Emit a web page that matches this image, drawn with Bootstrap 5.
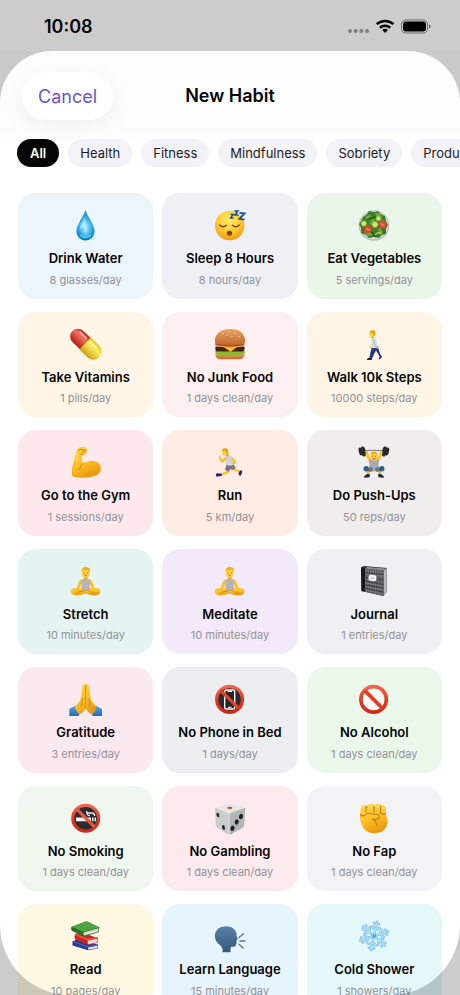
<!DOCTYPE html>
<html lang="en">
<head>
<meta charset="utf-8">
<meta name="viewport" content="width=device-width, initial-scale=1">
<title>New Habit</title>
<link rel="stylesheet" href="https://cdn.jsdelivr.net/npm/bootstrap@5.3.0/dist/css/bootstrap.min.css">
<style>
  body { font-family: Inter, "Liberation Sans", sans-serif; color: #060606; background: #fff; }
  .status { height: 51px; padding: 2px 29px 0 44px; font-size: 18px; font-weight: 600; }
  .sheet { min-height: 0; }
  /* dims everything outside the rounded sheet */
  .sheet::after { content: ""; position: absolute; inset: 0; border-radius: 52px 52px 70px 70px; box-shadow: 0 0 0 100px rgba(0,0,0,.2); pointer-events: none; }
  .sheet-head { padding: 21px 22px 19px; background: linear-gradient(#fdfdfd, #fcfcfc 80%, #fefefe); }
  .sheet-head h1 { font-size: 18px; line-height: 24px; font-weight: 600; }
  .cancel-btn { --bs-btn-color: #6654d8; --bs-btn-bg: #fff; --bs-btn-hover-bg: #f6f6fa; --bs-btn-hover-color: #6654d8; height: 48px; padding: 0 16px; font-size: 18px; box-shadow: 0 6px 28px rgba(0,0,0,.05); }
  .chips { gap: 9px; padding: 0 17px; overflow-x: auto; scrollbar-width: none; }
  .chips::-webkit-scrollbar, .habits::-webkit-scrollbar { display: none; }
  .chip { --bs-btn-color: #1c1c1e; --bs-btn-bg: #f2f2f7; --bs-btn-hover-bg: #e6e6ec; --bs-btn-hover-color: #1c1c1e; --bs-btn-active-bg: #060606; --bs-btn-active-color: #fff; flex: none; height: 28px; padding: 0 12px; font-size: 13px; line-height: 28px; }
  .chip.active { font-weight: 600; padding: 0 13px; }
  .habits { display: grid; grid-template-columns: repeat(3, 1fr); grid-auto-rows: max-content; gap: 13px 9px; padding: 26px 18px 40px; min-height: 0; overflow-y: auto; scrollbar-width: none; }
  .habit { border: 0; border-radius: 18px; padding: 16px 4px 11px; text-align: center; color: inherit; background: var(--tint); }
  .habit svg { display: block; width: 32px; height: 32px; margin: 0 auto 8px; overflow: visible; }
  .habit-name { display: block; font-size: 13px; line-height: 1.5; font-weight: 600; white-space: nowrap; }
  .habit-goal { display: block; margin-top: 3px; font-size: 11px; line-height: 16px; color: #929297; white-space: nowrap; }
  .t-water { --tint: #ecf5fb; } .t-sleep { --tint: #eff0f6; } .t-veg { --tint: #ebf6eb; }
  .t-amber { --tint: #fff5e6; } .t-junk { --tint: #fcefef; } .t-gym { --tint: #fde9eb; }
  .t-run { --tint: #ffece5; } .t-lift { --tint: #f0eeed; } .t-stretch { --tint: #e5f4f0; }
  .t-calm { --tint: #f4e9f8; } .t-journal { --tint: #eff0f2; } .t-thanks { --tint: #fce8ef; }
  .t-phone { --tint: #eceeef; } .t-alcohol { --tint: #ebf7eb; } .t-smoke { --tint: #eff6ee; }
  .t-gamble { --tint: #fdeaec; } .t-fist { --tint: #f3f3f6; } .t-read { --tint: #fff9e4; }
  .t-talk { --tint: #e6f4fe; } .t-cold { --tint: #e4f7f9; }
</style>
<script src="https://cdn.jsdelivr.net/npm/bootstrap@5.3.0/dist/js/bootstrap.bundle.min.js"></script>
</head>
<body class="vh-100 d-flex flex-column overflow-hidden">

<svg width="0" height="0" class="position-absolute" aria-hidden="true">
  <defs>
    <linearGradient id="gDrop" x1="0" y1="0" x2="0" y2="1"><stop offset="0" stop-color="#1287cf"/><stop offset=".45" stop-color="#3cb4ee"/><stop offset=".7" stop-color="#1d9be2"/><stop offset="1" stop-color="#0877c0"/></linearGradient>
    <radialGradient id="gDropIn" cx=".5" cy=".62" r=".5"><stop offset="0" stop-color="#c9f3ff"/><stop offset="1" stop-color="#6dd0f8" stop-opacity=".1"/></radialGradient>
    <radialGradient id="gFace" cx=".48" cy=".32" r=".7"><stop offset="0" stop-color="#ffee66"/><stop offset=".6" stop-color="#fdc530"/><stop offset="1" stop-color="#ee9612"/></radialGradient>
    <linearGradient id="gSkin" x1="0" y1="0" x2=".4" y2="1"><stop offset="0" stop-color="#ffd64a"/><stop offset=".6" stop-color="#fcbf25"/><stop offset="1" stop-color="#e99a13"/></linearGradient>
    <linearGradient id="gRed" x1="0" y1="0" x2="0" y2="1"><stop offset="0" stop-color="#f0684e"/><stop offset=".5" stop-color="#e23a26"/><stop offset="1" stop-color="#cf2a17"/></linearGradient>
    <linearGradient id="gPillR" x1="0" y1="0" x2="0" y2="1"><stop offset="0" stop-color="#b8261c"/><stop offset=".35" stop-color="#f0705e"/><stop offset="1" stop-color="#b61b12"/></linearGradient>
    <linearGradient id="gPillY" x1="0" y1="0" x2="0" y2="1"><stop offset="0" stop-color="#e6c723"/><stop offset=".35" stop-color="#fbec62"/><stop offset="1" stop-color="#c9a210"/></linearGradient>
    <linearGradient id="gBun" x1="0" y1="0" x2="0" y2="1"><stop offset="0" stop-color="#e9a566"/><stop offset="1" stop-color="#bd6a2a"/></linearGradient>
    <linearGradient id="gHead" x1="0" y1="0" x2="0" y2="1"><stop offset="0" stop-color="#587fa9"/><stop offset="1" stop-color="#36577f"/></linearGradient>
    <linearGradient id="gSleeve" x1="0" y1="0" x2="0" y2="1"><stop offset="0" stop-color="#58a7e4"/><stop offset="1" stop-color="#2268b4"/></linearGradient>
  </defs>
  <symbol id="yoga" viewBox="0 0 32 32">
    <path d="M2 25.500q5-3 11-2.500h6q6-.5 11 2.500q1.500 2.500-1.500 4q-3 1.500-8 .5l-5-1.500l-5 1.500q-5 1-8-.5q-3-1.500-1.500-4z" fill="url(#gSkin)"/>
    <path d="M5 29l8-3.500h5l8 3.500M8 26l7 1" fill="none" stroke="#d88b13" stroke-width=".9"/>
    <path d="M11.500 14.500q-2 .5-2.800 3l-2 5.500-4.700.8q-1.500.5-1 1.200l6.200.6q1.200-.2 1.700-1.600l2.600-5zM19.700 14.500q2 .5 2.800 3l2 5.500 4.700.8q1.500.5 1 1.200l-6.200.6q-1.200-.2-1.700-1.600l-2.600-5z" fill="#fcbf25"/>
    <path d="M11.300 14.500q1.500-.8 3-.8h2.800q1.500 0 3 .8.3 3-.4 5.500l.5 4.600q-4.500 2-9.200 0l.6-4.600q-.7-3-.3-5.500z" fill="#b4b4c0"/>
    <path d="M14 11h3.500v3q-1.700 2-3.500 0z" fill="#eda61c"/>
    <ellipse cx="15.700" cy="7.800" rx="4" ry="5" fill="#ffcf3d"/>
    <path d="M11.500 7.500Q10.800 3 14 2.200q4-1 5.500 1.300 1 1.600.3 4-.8-2.500-2-2.700-3 .8-5 0-1 .7-1.300 2.700z" fill="#efae18"/>
    <path d="M13.200 8q.7.5 1.400 0M16.900 8q.7.500 1.400 0M14.600 10.600h2.400" stroke="#8a5510" stroke-width=".7" fill="none"/>
  </symbol>
</svg>

<header class="status d-flex align-items-center justify-content-between flex-shrink-0">
  <time datetime="10:08">10:08</time>
  <span class="d-flex align-items-center">
    <svg width="84" height="20" viewBox="0 1 84 20" role="img" aria-label="No signal, Wi-Fi on, battery full">
      <g fill="#9f9f9f"><circle cx="3" cy="15" r="2"/><circle cx="8.700" cy="15" r="2"/><circle cx="14.300" cy="15" r="2"/><circle cx="20" cy="15" r="2"/></g>
      <g fill="none" stroke="#000" stroke-width="2.500"><path d="M29.800 8.200a12.200 12.200 0 0 1 16.600 0"/><path d="M33 11.700a7.600 7.600 0 0 1 10.200 0"/></g>
      <path d="M35.300 14a4.300 4.300 0 0 1 5.600 0L38.100 16.900z" fill="#000"/>
      <rect x="54.500" y="4" width="26" height="13" rx="4.200" fill="none" stroke="#858585"/>
      <rect x="56" y="5.500" width="23" height="10" rx="2.900" fill="#000"/>
      <path d="M82 8.300q1.600.7 1.600 2.200t-1.600 2.200z" fill="#858585"/>
    </svg>
  </span>
</header>

<main class="sheet position-relative flex-grow-1 d-flex flex-column">
  <div class="sheet-head row g-0 align-items-center flex-shrink-0">
    <div class="col"><button type="button" class="btn cancel-btn rounded-pill border-0">Cancel</button></div>
    <h1 class="col-auto m-0">New Habit</h1>
    <div class="col"></div>
  </div>

  <nav class="chips d-flex flex-shrink-0" aria-label="Categories">
    <button type="button" class="btn chip rounded-pill border-0 active" aria-pressed="true">All</button>
    <button type="button" class="btn chip rounded-pill border-0">Health</button>
    <button type="button" class="btn chip rounded-pill border-0">Fitness</button>
    <button type="button" class="btn chip rounded-pill border-0">Mindfulness</button>
    <button type="button" class="btn chip rounded-pill border-0">Sobriety</button>
    <button type="button" class="btn chip rounded-pill border-0">Productivity</button>
  </nav>

  <section class="habits flex-grow-1" aria-label="Habits">
    <button type="button" class="habit t-water">
      <svg viewBox="0 0 32 32" aria-hidden="true"><path d="M15.500 1C17 7 24.700 15.500 24.700 22.300a9.200 9.200 0 0 1-18.400 0C6.300 15.500 14 7 15.500 1z" fill="url(#gDrop)"/><path d="M15.500 5c1.500 5 7 11 7 17a7 7 0 0 1-14 0c0-6 5.500-12 7-17z" fill="url(#gDropIn)"/><path d="M14.500 8c-1 4-4.500 8-4.800 12 1.800-1.700 5-2 6.800-1 .4-4-.8-7-2-11z" fill="#c8f1ff" opacity=".65"/><path d="M10 26q5.500 5 11 0" stroke="#45d3f3" stroke-width="1.500" fill="none"/></svg>
      <span class="habit-name">Drink Water</span><span class="habit-goal">8 glasses/day</span>
    </button>
    <button type="button" class="habit t-sleep">
      <svg viewBox="0 0 32 32" aria-hidden="true"><circle cx="15.700" cy="16.500" r="14.700" fill="url(#gFace)"/><path d="M5.500 16q3.500 3.200 7 .3M18.300 16.300q3.500 3 7-.3" fill="none" stroke="#7a430c" stroke-width="1.400" stroke-linecap="round"/><ellipse cx="15.500" cy="24.200" rx="2.600" ry="2.500" fill="#703a0e"/><ellipse cx="15.500" cy="25.300" rx="1.500" ry=".9" fill="#a55a1d"/><g fill="none" stroke="#184f9e" stroke-linejoin="miter"><path d="M16.500 5.500h2.700l-2.700 3.500h3" stroke-width="1.300"/><path d="M20.400 2h3.500l-3 4h3.600" stroke-width="1.500"/><path d="M25.500 3.900l5 .5-5 5.500 5 .7" stroke-width="1.900"/></g></svg>
      <span class="habit-name">Sleep 8 Hours</span><span class="habit-goal">8 hours/day</span>
    </button>
    <button type="button" class="habit t-veg">
      <svg viewBox="0 0 32 32" aria-hidden="true"><circle cx="16" cy="16.500" r="15.300" fill="#b4bdb8"/><circle cx="16" cy="16" r="14.300" fill="#d9dfda"/><path d="M5 8l4-3 2-3 5 1 4-1 3 3 4 2 1 5 2 4-2 4 0 5-4 1-3 3-5-1-5 1-3-3-5-2 0-5-2-4 2-3z" fill="#3f7f24"/><path d="M7 8q5-4 7 0l-4 4zM17 4q6-1 7 4l-5 1zM11 15l4-6 4 5-3 3zM20 20q5-3 6 1l-5 5zM6 22l4-1 5 5-6 1zM24 10l4 4-4 2z" fill="#70a93a"/><path d="M9 11q7-5 13-1M13 22l5 6M21 17l5 5M8 19l-3 2" stroke="#245a16" stroke-width="1.500" fill="none"/><g fill="#cfe47a" stroke="#7fae35" stroke-width=".8"><circle cx="5.800" cy="14.500" r="2.700"/><circle cx="17" cy="15.500" r="3"/><circle cx="20.500" cy="9.500" r="2.500"/></g><path d="M17 26q3-4 7-1" stroke="#a5ce55" stroke-width="1.300" fill="none"/><circle cx="9.800" cy="20.300" r="4.100" fill="#d8492f"/><circle cx="24.500" cy="15.700" r="4.100" fill="#d8492f"/><path d="M8 19q2 3 3.500 1M23 14q1 3 3.200 2" stroke="#f39a75" fill="none" stroke-width="1.200"/></svg>
      <span class="habit-name">Eat Vegetables</span><span class="habit-goal">5 servings/day</span>
    </button>

    <button type="button" class="habit t-amber">
      <svg viewBox="0 0 32 32" aria-hidden="true"><g transform="rotate(44 15.500 15.800)"><path d="M16 8H5a7.800 7.800 0 0 0 0 15.600h11z" fill="url(#gPillR)"/><path d="M15 7.500h11.500a8.300 8.300 0 0 1 0 16.600H15z" fill="url(#gPillY)"/><path d="M3 11.300h9" stroke="#ffb9a9" stroke-width="1.500" stroke-linecap="round"/><path d="M18 11h8" stroke="#fffab0" stroke-width="1.600" stroke-linecap="round"/></g></svg>
      <span class="habit-name">Take Vitamins</span><span class="habit-goal">1 pills/day</span>
    </button>
    <button type="button" class="habit t-junk">
      <svg viewBox="0 0 32 32" aria-hidden="true"><path d="M1.500 25h28.800v2.500q-.5 3.700-5 3.800H6.500q-4.500-.1-5-3.800z" fill="url(#gBun)"/><path d="M1 23q2-1.500 4-.5 2 1.300 4 0 3-1 5 .5 3 1.500 5-.5 3-1 5 .5 3-1.800 6.700 0 .8 2.500-1.700 3.300-2-1-4 .5-3 1-5-.5-3 1.500-5 .5-3-1.300-5 0-3 1-5-.5-3 .8-4-3.300z" fill="#7fbf2c"/><path d="M1.500 18.500h28.800q1 4-1.500 5h-26q-2-1-1.300-5z" fill="#40240f"/><path d="M2 17.500h28l-7.500 2-6 4.300-6-4.300z" fill="#ffc02a"/><path d="M1.300 15.500h29v1.800q-14 2.800-29 0z" fill="#cb3b22"/><path d="M1.500 15.800Q-.2 12 2.300 7.500 5.500 1.200 16 1.100t13.700 6.400q2.400 4.500.8 8.300-14.500 2.500-29 0z" fill="url(#gBun)"/><g fill="#f5d09b"><ellipse cx="9" cy="5.500" rx=".8" ry=".5"/><ellipse cx="15" cy="3.800" rx=".8" ry=".5"/><ellipse cx="21" cy="5" rx=".8" ry=".5"/><ellipse cx="13" cy="7.500" rx=".8" ry=".5"/><ellipse cx="25" cy="8.500" rx=".8" ry=".5"/><ellipse cx="18" cy="8.500" rx=".8" ry=".5"/></g></svg>
      <span class="habit-name">No Junk Food</span><span class="habit-goal">1 days clean/day</span>
    </button>
    <button type="button" class="habit t-amber">
      <svg viewBox="0 0 32 32" aria-hidden="true"><path d="M13.800 19l-1.300 5-1 5.500-2 1.800 1 .7h3l.8-2 2.300-5 1.500-2.500 2 3.500 1.700 3-.3 1.700 1.400-.7 1-1.700-1.700-2-2.500-8.300z" fill="#2e3580"/><path d="M9 31.200l1.300-1.200 3.400.8v1.200H9zM20.500 30.500l2.500-2.300.7.8-2 2.500z" fill="#222"/><path d="M13.500 9.500q2-1.200 3.800.2 1.700 2 2 5.300l.2 5h-5.800q-.4-3-.7-6 0-3 .5-4.500z" fill="#d3e4e3"/><path d="M14.700 11q1.600 0 1.900 1.700l.8 3.800 2.300 3.300-1 .5-3-3z" fill="#b0c9cd"/><path d="M18.500 19l1.700.4.4 1.600-1.600-.2zM12.300 18l1.500 1-.8 1.500-1.300-1z" fill="#fcbf25"/><path d="M12.800 8h3v2.300h-2.500z" fill="#e9a81d"/><ellipse cx="14.200" cy="5.700" rx="2.800" ry="3.400" fill="#ffcf3d"/><path d="M11.500 4.500q.7-2.500 3-2.500 3.200.3 3.100 3.500-.2 2-1.600 3-.3-2.800-1.400-3.500z" fill="#e5a61a"/></svg>
      <span class="habit-name">Walk 10k Steps</span><span class="habit-goal">10000 steps/day</span>
    </button>

    <button type="button" class="habit t-gym">
      <svg viewBox="0 0 32 32" aria-hidden="true"><path d="M6.500 5q.5-3 3.500-4 4-.8 6.500 1.200 1.500 2 .2 4.200-1.200 2.600-4 2.600-1.500 3.500.3 8.300Q17 14.700 22 14.700q7 .3 8.800 6 .8 5.300-4.300 8.600-5 2.400-14 2.400-7 .1-10.500-1.700-.8-8 1.600-15z" fill="url(#gSkin)"/><path d="M12.900 8.700l-3-1M13 17.500q-3.300 1.700-3.400 6M8.500 4q3-1.700 4.500.5l3-.5M12 6q2 .7 3.500 0" fill="none" stroke="#c98511" stroke-width="1" stroke-linecap="round"/><path d="M5.500 15q2-3.500 2.300-8" stroke="#ffe37b" fill="none"/></svg>
      <span class="habit-name">Go to the Gym</span><span class="habit-goal">1 sessions/day</span>
    </button>
    <button type="button" class="habit t-run">
      <svg viewBox="0 0 32 32" aria-hidden="true"><path d="M13 21l-1 4.200-5.500 2.500.4 1.900 6.800-1.900 3.500-4.700 3.800 2 5.800 2-.5-2-4-2-4.300-3.500z" fill="#fcbf25"/><path d="M12.800 17.500l6.700.5 2.300 3.800-3.300 2.500-2-1.500-1.700 2.700-3.800-1.700z" fill="#77747b"/><path d="M2 28l1.300-.7 4.400.5.3 1.900-5.300 1q-1.200-.9-.7-2.700zM24.300 27.400l1.700-3 1.700.2.700 1.200-1.700 4-1.300-.2z" fill="#25236b"/><path d="M11.500 9.500q3-1 6 .6 2 1.600 1.900 4l.1 5q-3.300 1.200-7 0-.5-3-1-5z" fill="#d3d2dd"/><path d="M11.500 11l-3.200 2.300-2.200-3-1.600.2.600 2 2.200 3.800q.6.500 1.500.1l3.700-2.500zM18.400 11.500l4 3.700q.4 1-.4 1.700l-3.200 2-.8-1.200 1.700-1.600-2.400-2.500z" fill="#fcbf25"/><path d="M10.500 7h4v3.500l-3-.5z" fill="#e6a11c"/><ellipse cx="10.800" cy="6" rx="3" ry="3.500" fill="#ffcf3d"/><path d="M7.500 4.400Q8.500 2 11 2.200q3.500.3 3.300 3.600-.3 2-1.800 2.600-.3-2.700-1.600-3.700z" fill="#e5a61a"/></svg>
      <span class="habit-name">Run</span><span class="habit-goal">5 km/day</span>
    </button>
    <button type="button" class="habit t-lift">
      <svg viewBox="0 0 32 32" aria-hidden="true"><path d="M4 5q12-1.500 24 0" stroke="#777" stroke-width="1.200" fill="none"/><g fill="#292a2d"><ellipse cx="5.300" cy="5.500" rx="2.500" ry="5" transform="rotate(-12 5.300 5.500)"/><ellipse cx="26.500" cy="5.500" rx="2.500" ry="5" transform="rotate(12 26.500 5.500)"/><ellipse cx="2.500" cy="5.500" rx="1.700" ry="4" transform="rotate(-14 2.500 5.500)"/><ellipse cx="29.300" cy="5.500" rx="1.700" ry="4" transform="rotate(14 29.300 5.500)"/></g><path d="M7.300 5l2.300-.6 1 4 3 5.600-2 3-3.700-7.400zM24.600 5l-2.300-.6-1 4-3 5.600 2 3 3.700-7.400z" fill="#fcbf25"/><path d="M11 14q5-1.500 10 0l-.5 5 .7 5.500-5.200 1-5.200-1 .7-5.500z" fill="#a8a9b2"/><path d="M11.500 21.500L7 22l2.300 6.500 2.700-.3-1.200-4 2.200.3zM20.500 21.500L25 22l-2.300 6.500-2.700-.3 1.200-4-2.200.3z" fill="#fcbf25"/><path d="M12 20.500l3.300 2.300L13.500 26l-3.700-.7zM20 20.500l-3.300 2.300L18.500 26l3.700-.7z" fill="#71737c"/><circle cx="8.200" cy="22.700" r="2.700" fill="#28628f"/><circle cx="23.800" cy="22.700" r="2.700" fill="#28628f"/><path d="M9 28l3 .2-.5 3-5.500.5q-.3-1.700 3-3.700zM23 28l-3 .2.500 3 5.500.5q.3-1.700-3-3.700z" fill="#1f2a35"/><ellipse cx="16" cy="10.500" rx="3.400" ry="4.200" fill="#ffcf3d"/><path d="M12.500 9.500q-.2-4 3.500-4t3.500 4q-1-2-3.500-2t-3.500 2z" fill="#e5a61a"/><path d="M14 10.300h1M17 10.300h1M14.500 12.700q1.500 1 3 0" stroke="#80450b" stroke-width=".8" fill="none"/></svg>
      <span class="habit-name">Do Push-Ups</span><span class="habit-goal">50 reps/day</span>
    </button>

    <button type="button" class="habit t-stretch">
      <svg viewBox="0 0 32 32" aria-hidden="true"><use href="#yoga"/></svg>
      <span class="habit-name">Stretch</span><span class="habit-goal">10 minutes/day</span>
    </button>
    <button type="button" class="habit t-calm">
      <svg viewBox="0 0 32 32" aria-hidden="true"><use href="#yoga"/></svg>
      <span class="habit-name">Meditate</span><span class="habit-goal">10 minutes/day</span>
    </button>
    <button type="button" class="habit t-journal">
      <svg viewBox="0 0 32 32" aria-hidden="true"><path d="M3 2.500L6 1l23 2v23.500L25.500 31 3.500 26z" fill="#303134"/><path d="M25.500 5.500L29 3v23.500L25.500 31z" fill="#999ca1"/><path d="M26.500 5.500v24M27.700 4.500v23.500" stroke="#dedede" stroke-width=".5"/><path d="M7 3.500l18.500 2V31L7 26.800z" fill="#606267"/><path d="M7 3.500L9 2l19 1.500-2.500 2z" fill="#8d9094"/><path d="M8 6l17 2M8 9l17 2M8 18l17 3M8 22l17 3M8 25l17 4" stroke="#a5a7ab" stroke-width=".8" stroke-dasharray="1 1.300"/><path d="M8 7.500l17 2M8 12.500l17 2M8 16.500l17 3M8 20l17 3M8 23.500l17 3.500" stroke="#232427" stroke-width="1" stroke-dasharray="1.500 1.100"/><rect x="10.500" y="10" width="8" height="6" rx="2" fill="#f4f4f5" transform="rotate(6 14 13)"/><path d="M12.500 13.100l4 .3" stroke="#888" stroke-width=".7"/><path d="M3 2.500l4 1v23.300l-3.500-.8z" fill="#17181a"/></svg>
      <span class="habit-name">Journal</span><span class="habit-goal">1 entries/day</span>
    </button>

    <button type="button" class="habit t-thanks">
      <svg viewBox="0 0 32 32" aria-hidden="true"><path d="M-.7 26q4-2 6.300-3.400l4.500 7.400-1.500 3H-.7zM32 26q-4-2-6.300-3.400L21.200 30l1.500 3H32z" fill="url(#gSleeve)"/><path d="M15.700 2q-1.800-2-3.200.5l-1.700 12.800q-.6 3-2.800 5L4.800 24q1.200 5 4.400 7.500 4.300-1.500 6-6zM15.700 2q1.800-2 3.200.5l1.700 12.800q.6 3 2.800 5l3.200 3.700q-1.200 5-4.400 7.500-4.300-1.500-6-6z" fill="url(#gSkin)"/><path d="M15.700 2v24M13 15q-2 4-1.200 8M18.500 15q2 4 1.200 8" stroke="#c37e0d" stroke-width=".9" fill="none"/></svg>
      <span class="habit-name">Gratitude</span><span class="habit-goal">3 entries/day</span>
    </button>
    <button type="button" class="habit t-phone">
      <svg viewBox="0 0 32 32" aria-hidden="true"><circle cx="15.600" cy="16.400" r="13" fill="#2b2c30"/><rect x="10.700" y="7" width="10" height="19" rx="1.800" fill="#25262a" stroke="#f2f2f2" stroke-width="1.400"/><path d="M13.500 8.300h4.500M14 24.300h3.500" stroke="#eee" stroke-width="1.200"/><circle cx="15.600" cy="16.400" r="12.900" fill="none" stroke="url(#gRed)" stroke-width="3.300"/><path d="M6.600 7.400l18 18" stroke="#df4430" stroke-width="3.300"/></svg>
      <span class="habit-name">No Phone in Bed</span><span class="habit-goal">1 days/day</span>
    </button>
    <button type="button" class="habit t-alcohol">
      <svg viewBox="0 0 32 32" aria-hidden="true"><circle cx="15.600" cy="16.400" r="12.700" fill="#f8fbf8" stroke="url(#gRed)" stroke-width="3.700"/><path d="M6.800 7.600l17.600 17.600" stroke="#e23b27" stroke-width="3.700"/></svg>
      <span class="habit-name">No Alcohol</span><span class="habit-goal">1 days clean/day</span>
    </button>

    <button type="button" class="habit t-smoke">
      <svg viewBox="0 0 32 32" aria-hidden="true"><circle cx="15.700" cy="16.200" r="13" fill="#2b2c30"/><path d="M6 15.500h15v3.800H6z" fill="#f3f3f3"/><path d="M22 15.500h1.500v3.800H22zM24.500 15.500h1.500v3.800h-1.500z" fill="#eee"/><path d="M16.500 9q0 2 2.500 2h3q2.700.3 2.700 3M17 11q0 2.500 3 2.500" stroke="#e8e8e8" stroke-width="1.300" fill="none"/><circle cx="15.700" cy="16.200" r="12.900" fill="none" stroke="url(#gRed)" stroke-width="3.300"/><path d="M6.700 7.200l18 18" stroke="#e35744" stroke-width="3.300"/></svg>
      <span class="habit-name">No Smoking</span><span class="habit-goal">1 days clean/day</span>
    </button>
    <button type="button" class="habit t-gamble">
      <svg viewBox="0 0 32 32" aria-hidden="true"><path d="M1.500 6.500Q6 3 14.500 2q2-.4 4 0 8 1.200 12 4.300-2.500 3.500-16 6Q3.500 10.500 1.500 6.500z" fill="#e8e8e8"/><path d="M1 7q-.5-1.500 1-1l11.500 5q1.800 1 1.700 3v17.500q-.2 1-2 .5L3.500 26q-1.700-1.200-1.800-3z" fill="#cbcccd"/><path d="M31.200 7q.4-1.500-1-1L17 10.700q-2 .8-1.900 3v17.800q.4 1.300 2 .7L28.300 26q1.800-1.200 2-3z" fill="#b3b4b6"/><path d="M15.100 13.500v18" stroke="#e9e9e9" stroke-width=".8"/><ellipse cx="15.700" cy="5.900" rx="2.700" ry="1.100" fill="#e23f2c"/><g fill="#202124"><ellipse cx="3.900" cy="13" rx="1.300" ry="2.400" transform="rotate(-15 3.900 13)"/><ellipse cx="9.500" cy="25.500" rx="1.400" ry="2.500" transform="rotate(-15 9.500 25.500)"/><ellipse cx="27" cy="14.500" rx="2" ry="2.700" transform="rotate(20 27 14.500)"/><ellipse cx="22.700" cy="20" rx="2" ry="2.700" transform="rotate(20 22.700 20)"/><ellipse cx="18.500" cy="26.200" rx="2" ry="2.700" transform="rotate(20 18.500 26.200)"/></g></svg>
      <span class="habit-name">No Gambling</span><span class="habit-goal">1 days clean/day</span>
    </button>
    <button type="button" class="habit t-fist">
      <svg viewBox="0 0 32 32" aria-hidden="true"><path d="M2.500 7q.5-4 3.500-4.300 1.500 0 2.500.8 2-2 5.800-1.500 1.600.2 2.200 1 2-1.300 4.500-1 1.800.2 2.600 1.400 3.800-.2 4.400 3l-.6 6.200q2.700 3.400 2 8.500-1 6-6 9-4.400 1.700-10.400.9-5-1.100-8-5.500-2.500-4.300-3.100-9.500.1-3 .4-4z" fill="url(#gSkin)"/><path d="M8.300 4.500L7.800 10M16 4.500V10M22.700 4.500L22.500 10M2.500 12.500q2.500 2.500 4.700.3 2.500-2.500 5.500-1l6.500.7q3 1.300 1.800 3.500-1 1.500-4 1.300l-3-.2q4.500 1.500 4.500 6.200M22.300 11q3 2 5.500.5" fill="none" stroke="#bd7a0d" stroke-width="1.100" stroke-linecap="round"/><path d="M4 5.500l2-1M11 4.500h2M18 4.500h2.500M24.500 6l2 .3" stroke="#ffe77f" stroke-width="1.300" stroke-linecap="round"/></svg>
      <span class="habit-name">No Fap</span><span class="habit-goal">1 days clean/day</span>
    </button>

    <button type="button" class="habit t-read">
      <svg viewBox="0 0 32 32" aria-hidden="true"><path d="M2.500 21.500L10 18l18 7v3.500L18 30.300 2.500 25.500z" fill="#263a8e"/><path d="M18 27.500l9.500-2v2.800L18 29.500z" fill="#e8e3e6"/><path d="M2.500 21.500L18 26.800l10-2" stroke="#4661bb" stroke-width="1.300" fill="none"/><path d="M5 14l6-2 17 6.300v4.500L18 25 5.300 19.700q-1.500-3-.3-5.700z" fill="#c72a21"/><path d="M17.500 20.700l10-2v3.500L18 24.200z" fill="#f4dbd7"/><path d="M5.500 14.500l12 5 10.500-1.700" stroke="#ed5847" stroke-width="1.400" fill="none"/><path d="M1.300 7L16.500 1.200l13 6.300q-1.200 2-.2 4.500L14 16.500 1.700 10.800q-1-1.800-.4-3.800z" fill="#29702a"/><path d="M13.500 12.500l15-4.300q-.8 1.300-.1 3.200L14 15.500z" fill="#eceee1"/><path d="M1.500 6.800L16.500 1.200l13 6-16 4.500z" fill="#4fa343"/><path d="M13.500 13.800l14.500-4.200" stroke="#b9bcae" stroke-width=".6"/></svg>
      <span class="habit-name">Read</span><span class="habit-goal">10 pages/day</span>
    </button>
    <button type="button" class="habit t-talk">
      <svg viewBox="0 0 32 32" aria-hidden="true"><path d="M8.500 32.200q.7-4-2.200-7Q.7 21.700.8 15.500 1.700 6.700 11.500 6.200q7.500.1 10.300 5.300 1 2 .6 4l1.300 3.200q.2.900-1.200 1.200l.4 1.700-.8.700.7.900-.8 1.100q.1 1.900-1.300 2.300-2.200.3-3.700.1-.9 2.500-.5 5.500z" fill="url(#gHead)"/><path d="M25 17.500l4.500-3.700M26 21h5M25 24.300l4 3.700" stroke="#5d7893" stroke-width="1.400" stroke-linecap="round"/></svg>
      <span class="habit-name">Learn Language</span><span class="habit-goal">15 minutes/day</span>
    </button>
    <button type="button" class="habit t-cold">
      <svg viewBox="0 0 32 32" aria-hidden="true"><defs><g id="arm"><path d="M16 16V1.500M16 10l-3.700-3M16 10l3.700-3M16 5.500l-2.600-2.300M16 5.500l2.600-2.300"/></g><g id="flake"><use href="#arm"/><use href="#arm" transform="rotate(60 16 16)"/><use href="#arm" transform="rotate(120 16 16)"/><use href="#arm" transform="rotate(180 16 16)"/><use href="#arm" transform="rotate(240 16 16)"/><use href="#arm" transform="rotate(300 16 16)"/></g></defs><g fill="none" stroke-linecap="round" transform="rotate(12 16 16)"><use href="#flake" stroke="#68b5e6" stroke-width="2.400"/><use href="#flake" stroke="#b5e2fa" stroke-width="1.300"/></g><circle cx="16" cy="16" r="2" fill="#4ea9e4"/></svg>
      <span class="habit-name">Cold Shower</span><span class="habit-goal">1 showers/day</span>
    </button>
  </section>
</main>
</body>
</html>
